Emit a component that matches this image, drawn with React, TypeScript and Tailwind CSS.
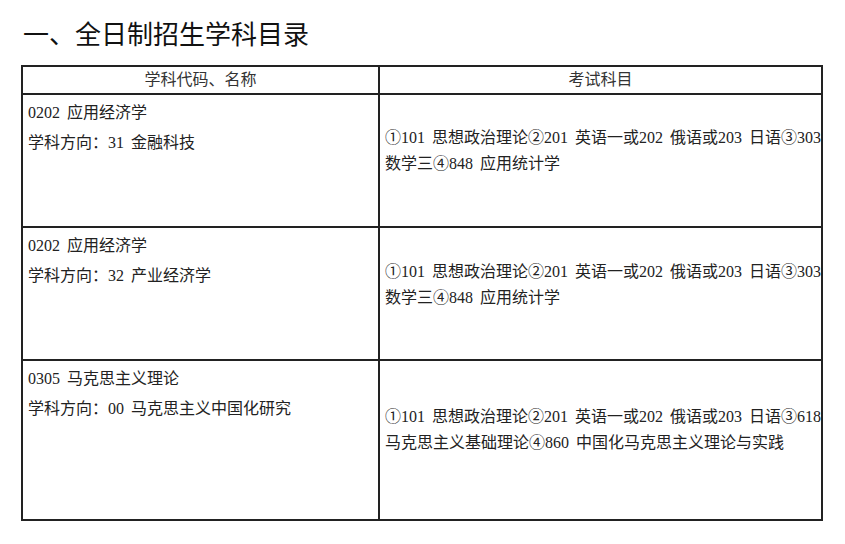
const rows = [
  {
    left: ["0202 应用经济学", "学科方向：31 金融科技"],
    right: [
      "①101 思想政治理论②201 英语一或202 俄语或203 日语③303",
      "数学三④848 应用统计学",
    ],
    height: "h-[133px]",
    rightPad: "pt-[30px]",
  },
  {
    left: ["0202 应用经济学", "学科方向：32 产业经济学"],
    right: [
      "①101 思想政治理论②201 英语一或202 俄语或203 日语③303",
      "数学三④848 应用统计学",
    ],
    height: "h-[133px]",
    rightPad: "pt-[31px]",
  },
  {
    left: ["0305 马克思主义理论", "学科方向：00 马克思主义中国化研究"],
    right: [
      "①101 思想政治理论②201 英语一或202 俄语或203 日语③618",
      "马克思主义基础理论④860 中国化马克思主义理论与实践",
    ],
    height: "h-[158px]",
    rightPad: "pt-[43px]",
  },
];

export default function App() {
  return (
    <div className="h-[544px] w-[845px] overflow-hidden bg-white">
      <h1 className="pl-[23px] pt-[13px] font-['Noto_Sans_CJK_SC',sans-serif] text-[26px] font-normal leading-[39px] text-[#111]">
        一、全日制招生学科目录
      </h1>

      <div className="ml-[21px] mt-[13px] w-[802px] border-2 border-[#222] font-['Liberation_Serif','Noto_Sans_CJK_SC',serif] text-[16px] text-[#222] [word-spacing:3px]">
        {/* Header */}
        <div className="grid grid-cols-[357px_1fr] border-b-2 border-[#222] text-[#333]">
          <div className="h-[26px] border-r-2 border-[#222] text-center leading-[26px]">
            学科代码、名称
          </div>
          <div className="h-[26px] text-center leading-[26px]">考试科目</div>
        </div>

        {rows.map((row, i) => (
          <div
            key={i}
            className={`grid grid-cols-[357px_1fr] ${row.height} ${
              i < rows.length - 1 ? "border-b-2 border-[#222]" : ""
            }`}
          >
            <div className="border-r-2 border-[#222] pl-[5px] pt-[3px] leading-[30px]">
              {row.left.map((line) => (
                <div key={line} className="whitespace-pre">
                  {line}
                </div>
              ))}
            </div>
            <div className={`pl-[5px] leading-[26px] ${row.rightPad}`}>
              {row.right.map((line) => (
                <div key={line} className="whitespace-pre">
                  {line}
                </div>
              ))}
            </div>
          </div>
        ))}
      </div>
    </div>
  );
}
